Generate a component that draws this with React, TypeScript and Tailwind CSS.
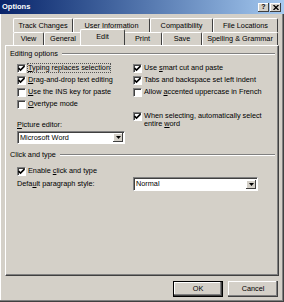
import React from "react";

const sunken =
  "border border-t-[#808080] border-l-[#808080] border-r-white border-b-white shadow-[inset_1px_1px_0_#404040]";

function CheckBox({ checked }: { checked?: boolean }) {
  return (
    <span className={`flex h-[9px] w-[9px] shrink-0 items-center justify-center bg-white ${sunken}`}>
      {checked && (
        <svg width="7" height="7" viewBox="0 0 7 7">
          <path d="M0.5 3 L2.5 5 L6.5 1" fill="none" stroke="#000" strokeWidth="1.6" />
        </svg>
      )}
    </span>
  );
}

function Label({ text, u }: { text: string; u?: number }) {
  if (u === undefined) return <>{text}</>;
  return (
    <>
      {text.slice(0, u)}
      <span className="underline">{text[u]}</span>
      {text.slice(u + 1)}
    </>
  );
}

function CheckRow({ checked, text, u, focus }: { checked?: boolean; text: string; u?: number; focus?: boolean }) {
  return (
    <div className="flex h-[12px] items-center">
      <CheckBox checked={checked} />
      <span className={`ml-[2px] whitespace-nowrap leading-[8px] ${focus ? "outline outline-1 outline-dotted outline-[#555]" : ""}`}>
        <Label text={text} u={u} />
      </span>
    </div>
  );
}

function Select({ value, className }: { value: string; className: string }) {
  return (
    <div className={`flex items-center bg-white ${sunken} ${className}`}>
      <span className="flex-1 pl-[2px] leading-[8px]">{value}</span>
      <span className="mr-[1px] flex h-[9px] w-[10px] items-center justify-center bg-[#d4d0c8] shadow-[inset_-1px_-1px_0_#404040,inset_1px_1px_0_#fff]">
        <svg width="5" height="3" viewBox="0 0 5 3">
          <path d="M0 0 H5 L2.5 3 Z" fill="#000" />
        </svg>
      </span>
    </div>
  );
}

function GroupHeader({ title }: { title: string }) {
  return (
    <div className="flex h-[10px] items-center pl-[4px] pr-[3px]">
      <span className="whitespace-nowrap leading-[8px]">{title}</span>
      <span className="ml-[4px] h-[2px] flex-1 border-t border-b border-t-[#808080] border-b-white" />
    </div>
  );
}

function Tab({ label, w, selected }: { label: string; w: string; selected?: boolean }) {
  return (
    <div
      className={`flex items-center justify-center rounded-t-[2px] border-l border-t border-r border-l-white border-t-white border-r-[#404040] bg-[#d4d0c8] whitespace-nowrap leading-[8px] ${w} ${
        selected ? "relative z-10 -mx-[2px] -mt-[2px] h-[16px] pb-[2px]" : "h-full"
      }`}
    >
      {label}
    </div>
  );
}

export default function App() {
  return (
    <div className="relative h-[302px] w-[284px] overflow-hidden bg-[#d4d0c8] font-['Liberation_Sans',Arial,sans-serif] text-[7.3px] text-black shadow-[inset_-1px_-1px_0_#404040,inset_-2px_-2px_0_#808080,inset_1px_1px_0_#fff]">
      {/* title bar */}
      <div className="flex h-[14px] items-center bg-linear-to-r from-[#0a246a] to-[#a6caf0] pl-[2px] pr-[3px]">
        <span className="flex-1 text-[7.5px] font-bold text-white">Options</span>
        <span className="flex h-[9px] w-[11px] items-center justify-center bg-[#d4d0c8] text-[7px] font-bold shadow-[inset_-1px_-1px_0_#404040,inset_1px_1px_0_#fff]">
          ?
        </span>
        <span className="ml-[1px] flex h-[9px] w-[11px] items-center justify-center bg-[#d4d0c8] shadow-[inset_-1px_-1px_0_#404040,inset_1px_1px_0_#fff]">
          <svg width="6" height="5" viewBox="0 0 6 5">
            <path d="M0.5 0 L5.5 5 M5.5 0 L0.5 5" stroke="#000" strokeWidth="1.3" />
          </svg>
        </span>
      </div>

      {/* tabs */}
      <div className="mt-[4px] pl-[13px]">
        <div className="flex h-[14px]">
          <Tab label="Track Changes" w="w-[60px]" />
          <Tab label="User Information" w="w-[77px]" />
          <Tab label="Compatibility" w="w-[63px]" />
          <Tab label="File Locations" w="w-[65px]" />
        </div>
        <div className="flex h-[13px] items-end">
          <Tab label="View" w="w-[31px]" />
          <Tab label="General" w="w-[38px]" />
          <Tab label="Edit" w="w-[45px]" selected />
          <Tab label="Print" w="w-[39px]" />
          <Tab label="Save" w="w-[40px]" />
          <Tab label="Spelling & Grammar" w="w-[76px]" />
        </div>
      </div>

      {/* panel */}
      <div className="ml-[5px] h-[231px] w-[274px] border border-t-white border-l-white border-r-[#404040] border-b-[#404040] shadow-[inset_-1px_-1px_0_#808080]">
        <div className="mt-[3px]">
          <GroupHeader title="Editing options" />
        </div>
        <div className="mt-[3px] flex">
          <div className="w-[127px] pl-[11px]">
            <CheckRow checked text="Typing replaces selection" u={0} focus />
            <CheckRow checked text="Drag-and-drop text editing" u={0} />
            <CheckRow text="Use the INS key for paste" u={0} />
            <CheckRow text="Overtype mode" u={0} />
            <div className="mt-[10px] flex h-[10px] items-center leading-[8px]">
              <Label text="Picture editor:" u={0} />
            </div>
            <Select value="Microsoft Word" className="mt-[1px] h-[13px] w-[108px]" />
          </div>
          <div className="flex-1">
            <CheckRow checked text="Use smart cut and paste" u={4} />
            <CheckRow checked text="Tabs and backspace set left indent" />
            <CheckRow text="Allow accented uppercase in French" u={6} />
            <div className="mt-[14px] flex items-start">
              <span className="mt-[0px]">
                <CheckBox checked />
              </span>
              <span className="ml-[2px] leading-[8px]">
                When selecting, automatically select
                <br />
                entire <Label text="word" u={0} />
              </span>
            </div>
          </div>
        </div>
        <div className="mt-[6px]">
          <GroupHeader title="Click and type" />
        </div>
        <div className="mt-[5px] pl-[11px]">
          <CheckRow checked text="Enable click and type" u={7} />
          <div className="flex h-[14px] items-center">
            <span className="w-[116px] leading-[8px]">
              <Label text="Default paragraph style:" u={4} />
            </span>
            <Select value="Normal" className="h-[14px] w-[125px]" />
          </div>
        </div>
      </div>

      {/* buttons */}
      <div className="mt-[5px] flex justify-end gap-[5px] pr-[6px]">
        <button className="flex h-[16px] w-[50px] items-center justify-center border border-black bg-[#d4d0c8] leading-[8px] shadow-[inset_-1px_-1px_0_#404040,inset_-2px_-2px_0_#808080,inset_1px_1px_0_#fff]">
          OK
        </button>
        <button className="flex h-[16px] w-[50px] items-center justify-center bg-[#d4d0c8] leading-[8px] shadow-[inset_-1px_-1px_0_#404040,inset_-2px_-2px_0_#808080,inset_1px_1px_0_#fff]">
          Cancel
        </button>
      </div>
    </div>
  );
}
